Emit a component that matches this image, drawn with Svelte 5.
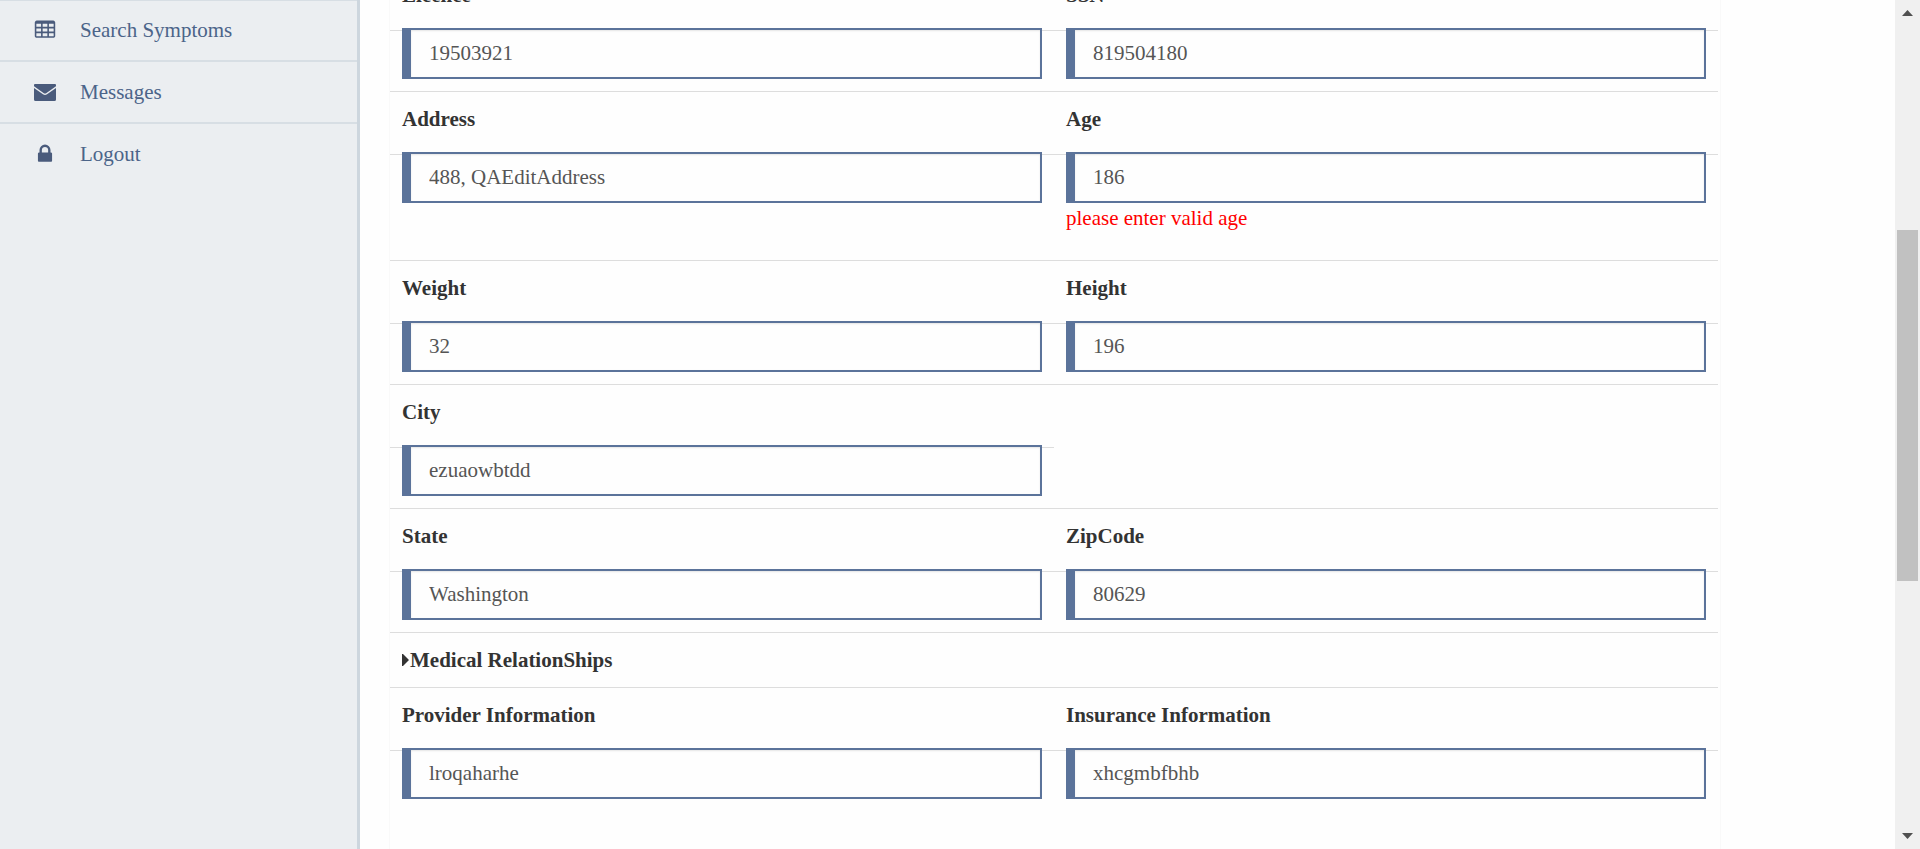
<script>
  const rows = [
    [
      { id: 'licence', label: 'Licence', value: '19503921' },
      { id: 'ssn', label: 'SSN', value: '819504180' }
    ],
    [
      { id: 'address', label: 'Address', value: '488, QAEditAddress' },
      { id: 'age', label: 'Age', value: '186', error: 'please enter valid age' }
    ],
    [
      { id: 'weight', label: 'Weight', value: '32' },
      { id: 'height', label: 'Height', value: '196' }
    ],
    [{ id: 'city', label: 'City', value: 'ezuaowbtdd' }],
    [
      { id: 'state', label: 'State', value: 'Washington' },
      { id: 'zip', label: 'ZipCode', value: '80629' }
    ]
  ];

  const medical = [
    { id: 'provider', label: 'Provider Information', value: 'lroqaharhe' },
    { id: 'insurance', label: 'Insurance Information', value: 'xhcgmbfbhb' }
  ];

  const nav = [
    {
      label: 'Search Symptoms',
      box: '0 0 1792 1792',
      icon: 'M576 1376v-192q0-14-9-23t-23-9h-320q-14 0-23 9t-9 23v192q0 14 9 23t23 9h320q14 0 23-9t9-23zm0-384v-192q0-14-9-23t-23-9h-320q-14 0-23 9t-9 23v192q0 14 9 23t23 9h320q14 0 23-9t9-23zm512 384v-192q0-14-9-23t-23-9h-320q-14 0-23 9t-9 23v192q0 14 9 23t23 9h320q14 0 23-9t9-23zm-512-768v-192q0-14-9-23t-23-9h-320q-14 0-23 9t-9 23v192q0 14 9 23t23 9h320q14 0 23-9t9-23zm512 384v-192q0-14-9-23t-23-9h-320q-14 0-23 9t-9 23v192q0 14 9 23t23 9h320q14 0 23-9t9-23zm512 384v-192q0-14-9-23t-23-9h-320q-14 0-23 9t-9 23v192q0 14 9 23t23 9h320q14 0 23-9t9-23zm-512-768v-192q0-14-9-23t-23-9h-320q-14 0-23 9t-9 23v192q0 14 9 23t23 9h320q14 0 23-9t9-23zm512 384v-192q0-14-9-23t-23-9h-320q-14 0-23 9t-9 23v192q0 14 9 23t23 9h320q14 0 23-9t9-23zm0-384v-192q0-14-9-23t-23-9h-320q-14 0-23 9t-9 23v192q0 14 9 23t23 9h320q14 0 23-9t9-23zm128-320v1088q0 66-47 113t-113 47h-1344q-66 0-113-47t-47-113v-1088q0-66 47-113t113-47h1344q66 0 113 47t47 113z'
    },
    {
      label: 'Messages',
      box: '0 0 22 22',
      icon: 'M1 3H21Q22 3 22 4V5.200L12.500 12Q11 13 9.500 12L0 5.200V4Q0 3 1 3ZM0 7L9 13.300Q11 14.600 13 13.300L22 7V18.500Q22 20 20.500 20H1.500Q0 20 0 18.500Z'
    },
    {
      label: 'Logout',
      box: '0 0 1792 1792',
      icon: 'M640 768h512v-192q0-106-75-181t-181-75-181 75-75 181v192zm832 96v576q0 40-28 68t-68 28h-960q-40 0-68-28t-28-68v-576q0-40 28-68t68-28h32v-192q0-184 132-316t316-132 316 132 132 316v192h32q40 0 68 28t28 68z'
    }
  ];

  const scroll = { before: 25.7, thumb: 43.9 };
</script>

{#snippet fieldRow(fields)}
  <div class="row">
    {#each fields as f}
      <div class="field">
        <label for={f.id}>{f.label}</label>
        <div class="control">
          <input id={f.id} type="text" value={f.value} />
          {#if f.error}<p class="error">{f.error}</p>{/if}
        </div>
      </div>
    {/each}
  </div>
{/snippet}

<div class="page">
  <nav class="sidebar">
    {#each nav as item}
      <a href="#top">
        <svg viewBox={item.box} aria-hidden="true"><path d={item.icon} /></svg>
        <span>{item.label}</span>
      </a>
    {/each}
  </nav>

  <main>
    <form>
      {#each rows as fields}
        {@render fieldRow(fields)}
      {/each}
      <div class="row section">
        <button type="button" class="toggle">
          <svg viewBox="0 0 7 12" aria-hidden="true"><path d="M0 0v12q.5.3 1 0l5.500-5.500q.5-.5 0-1L1 0q-.5-.3-1 0z" /></svg>Medical RelationShips
        </button>
      </div>
      {@render fieldRow(medical)}
    </form>
  </main>

  <div class="scrollbar" aria-hidden="true">
    <svg viewBox="0 0 25 25"><path d="M7 16h11l-5.500-6z" /></svg>
    <div class="track">
      <div style:flex-basis="{scroll.before}%"></div>
      <div class="thumb" style:flex-basis="{scroll.thumb}%"></div>
    </div>
    <svg viewBox="0 0 25 25"><path d="M7 9h11l-5.500 6z" /></svg>
  </div>
</div>

<style>
  :global(body) {
    margin: 0;
    background: #fefefe;
  }

  .page {
    display: flex;
    height: 100vh;
    overflow: hidden;
    font-family: 'Liberation Serif', 'Times New Roman', serif;
    font-size: 21px;
    line-height: 30px;
    color: #555;
  }

  .sidebar {
    box-sizing: border-box;
    flex: 0 0 360px;
    background: #ebeef1;
    box-shadow: inset 0 1px #d7dee4;
    border-right: 3px solid #cdd6de;
  }

  .sidebar a {
    display: flex;
    align-items: center;
    gap: 24px;
    height: 60px;
    padding-left: 34px;
    border-bottom: 2px solid #d7dee4;
    color: #4b6489;
    text-decoration: none;
  }

  .sidebar a:last-child {
    border-bottom: 0;
  }

  .sidebar svg {
    width: 22px;
    height: 22px;
    fill: #4a5b7c;
  }

  main {
    flex: 1;
    min-width: 0;
  }

  form {
    min-height: 120vh;
    margin: -33px 174px 0 29px;
    padding-right: 2px;
    border: solid #f9f9f9;
    border-width: 0 1px;
  }

  .row {
    display: grid;
    grid-template-columns: 1fr 1fr;
    border-top: 1px solid #ddd;
  }

  .field label {
    display: block;
    padding: 12px 12px 20px;
    border-bottom: 1px solid #ddd;
    font-weight: bold;
    color: #333;
  }

  .control {
    position: relative;
    margin-top: -3px;
    padding: 0 12px 12px;
  }

  input {
    display: block;
    box-sizing: border-box;
    width: 100%;
    height: 51px;
    padding: 0 18px;
    border: 2px solid #5b739a;
    border-left-width: 9px;
    border-radius: 0;
    background: #fefefe;
    box-shadow: inset 0 1px 2px rgba(0, 0, 0, 0.1);
    font: inherit;
    color: #555;
    outline: none;
  }

  .error {
    margin: 0 0 15px;
    color: #f00;
  }

  .section {
    padding: 12px;
  }

  .toggle {
    display: flex;
    align-items: center;
    gap: 1px;
    padding: 0;
    border: 0;
    background: none;
    font: inherit;
    font-weight: bold;
    color: #333;
  }

  .toggle svg {
    width: 7px;
    height: 12px;
    fill: #333;
  }

  .scrollbar {
    display: flex;
    flex-direction: column;
    flex: 0 0 25px;
    background: #f0f0f0;
  }

  .scrollbar svg {
    width: 25px;
    height: 25px;
    fill: #505050;
  }

  .track {
    display: flex;
    flex-direction: column;
    flex: 1;
    padding: 0 2px;
  }

  .thumb {
    background: #c1c1c1;
  }
</style>
